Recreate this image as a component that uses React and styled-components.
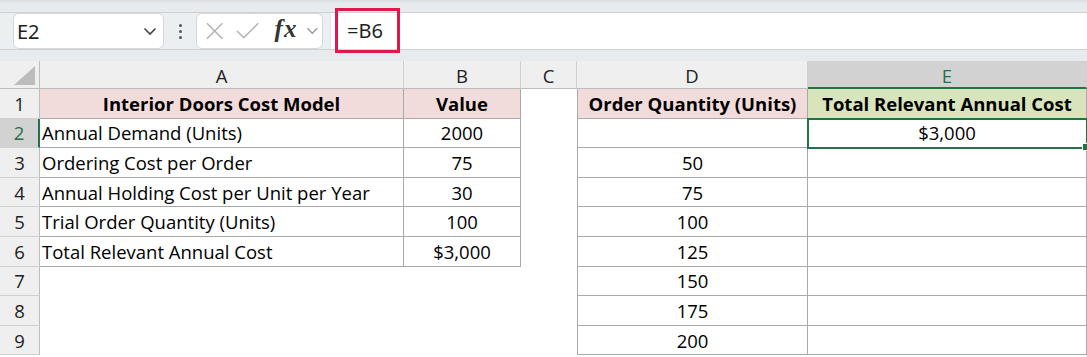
import React from "react";
import styled, { createGlobalStyle } from "styled-components";

const GlobalStyle = createGlobalStyle`
  body {
    margin: 0;
    background: #fff;
    font-family: "Open Sans", "Noto Sans", sans-serif;
    overflow: hidden;
  }
`;

const green = "#217346";
const line = "#a9a9a9";

const cols = ["A", "B", "C", "D", "E"];

const rows = [
  [
    { v: "Interior Doors Cost Model", bold: true, bg: "#f2dcdb", border: true },
    { v: "Value", bold: true, bg: "#f2dcdb", border: true },
    {},
    { v: "Order Quantity (Units)", bold: true, bg: "#f2dcdb", border: true, left: true },
    { v: "Total Relevant Annual Cost", bold: true, bg: "#d8e4bc", border: true },
  ],
  [
    { v: "Annual Demand (Units)", align: "left", border: true },
    { v: "2000", border: true },
    {},
    { v: "", border: true, left: true },
    { v: "$3,000", border: true, selected: true },
  ],
  [
    { v: "Ordering Cost per Order", align: "left", border: true },
    { v: "75", border: true },
    {},
    { v: "50", border: true, left: true },
    { v: "", border: true },
  ],
  [
    { v: "Annual Holding Cost per Unit per Year", align: "left", border: true },
    { v: "30", border: true },
    {},
    { v: "75", border: true, left: true },
    { v: "", border: true },
  ],
  [
    { v: "Trial Order Quantity (Units)", align: "left", border: true },
    { v: "100", border: true },
    {},
    { v: "100", border: true, left: true },
    { v: "", border: true },
  ],
  [
    { v: "Total Relevant Annual Cost", align: "left", border: true },
    { v: "$3,000", border: true },
    {},
    { v: "125", border: true, left: true },
    { v: "", border: true },
  ],
  [{}, {}, {}, { v: "150", border: true, left: true }, { v: "", border: true }],
  [{}, {}, {}, { v: "175", border: true, left: true }, { v: "", border: true }],
  [{}, {}, {}, { v: "200", border: true, left: true }, { v: "", border: true }],
];

const App = () => {
  return (
    <>
      <GlobalStyle />
      <Window>
        <RibbonEdge />
        <FormulaRow>
          <Tools>
            <NameBox>
              <span>E2</span>
              <Chevron width="14" height="9" viewBox="0 0 14 9">
                <path d="M1.5 1.5 L7 7 L12.5 1.5" />
              </Chevron>
            </NameBox>
            <Dots>
              <i />
              <i />
              <i />
            </Dots>
            <FxBox>
              <svg width="18" height="18" viewBox="0 0 18 18">
                <path d="M1 1 L17 17 M17 1 L1 17" stroke="#b3b3b3" strokeWidth="1.6" fill="none" />
              </svg>
              <svg width="24" height="18" viewBox="0 0 24 18">
                <path d="M1 9 L8 16 L23 1" stroke="#b3b3b3" strokeWidth="1.6" fill="none" />
              </svg>
              <Fx>fx</Fx>
              <Chevron width="13" height="8" viewBox="0 0 14 9" $light>
                <path d="M1.5 1.5 L7 7 L12.5 1.5" />
              </Chevron>
            </FxBox>
          </Tools>
          <FormulaInput>
            <Highlight>=B6</Highlight>
          </FormulaInput>
        </FormulaRow>
        <Band />
        <Grid>
          <Corner>
            <svg width="21" height="19" viewBox="0 0 21 19">
              <path d="M21 0 L21 19 L0 19 Z" fill="#bcbcbc" />
            </svg>
          </Corner>
          {cols.map((c) => (
            <ColHead key={c} $active={c === "E"}>
              {c}
            </ColHead>
          ))}
          {rows.map((r, i) => (
            <React.Fragment key={i}>
              <RowHead $active={i === 1}>{i + 1}</RowHead>
              {r.map((cell, j) => (
                <Cell
                  key={j}
                  $bold={cell.bold}
                  $bg={cell.bg}
                  $align={cell.align}
                  $border={cell.border}
                  $left={cell.left}
                  $selected={cell.selected}
                >
                  {cell.v}
                  {cell.selected && <FillHandle />}
                </Cell>
              ))}
            </React.Fragment>
          ))}
        </Grid>
      </Window>
    </>
  );
};

export default App;

const Window = styled.div`
  width: 1087px;
  height: 357px;
  overflow: hidden;
  display: flex;
  flex-direction: column;
`;

const RibbonEdge = styled.div`
  height: 12px;
  flex-shrink: 0;
  background: linear-gradient(#d9dde1, #e7eaed 30%, #e9ecef);
  border-bottom: 1px solid #cdd0d3;
`;

const FormulaRow = styled.div`
  height: 36px;
  flex-shrink: 0;
  display: flex;
  position: relative;
  z-index: 2;
`;

const Tools = styled.div`
  width: 330px;
  background: #eceff2;
  display: flex;
  align-items: center;
  padding-left: 13px;
  box-sizing: border-box;
`;

const NameBox = styled.div`
  width: 151px;
  height: 36px;
  box-sizing: border-box;
  background: #fff;
  border: 1px solid #d6d8da;
  border-radius: 6px;
  display: flex;
  align-items: center;
  justify-content: space-between;
  padding: 0 6px 0 3px;
  font-family: "Noto Sans", "Open Sans", sans-serif;
  font-size: 20px;
  color: #1f1f1f;
`;

const Chevron = styled.svg`
  fill: none;
  stroke: ${(p) => (p.$light ? "#9a9a9a" : "#444")};
  stroke-width: 1.6;
`;

const Dots = styled.div`
  width: 32px;
  display: flex;
  flex-direction: column;
  align-items: center;
  gap: 3px;
  i {
    width: 3px;
    height: 3px;
    border-radius: 50%;
    background: #555;
  }
`;

const FxBox = styled.div`
  width: 127px;
  height: 36px;
  box-sizing: border-box;
  background: #fff;
  border: 1px solid #d6d8da;
  border-radius: 6px;
  display: flex;
  align-items: center;
  padding: 0 3px 0 9px;
  gap: 15px;
  svg:nth-child(2) {
    margin-left: -2px;
  }
  svg:last-child {
    margin-left: -6px;
  }
`;

const Fx = styled.span`
  font-family: "Liberation Serif", "DejaVu Serif", serif;
  font-style: italic;
  font-weight: 600;
  font-size: 25px;
  letter-spacing: 1px;
  color: #333;
  margin-top: -4px;
`;

const FormulaInput = styled.div`
  flex: 1;
  background: #fff;
  border-left: 1px solid #e2e4e6;
  display: flex;
  align-items: flex-start;
  padding-left: 4px;
`;

const Highlight = styled.div`
  height: 45px;
  width: 65px;
  margin-top: -5px;
  box-sizing: border-box;
  border: 3px solid #e0194a;
  display: flex;
  align-items: center;
  padding-left: 9px;
  font-family: "Noto Sans", "Open Sans", sans-serif;
  font-size: 20px;
  color: #1f1f1f;
`;

const Band = styled.div`
  height: 11px;
  flex-shrink: 0;
  background: #e8ebee;
  border-top: 1px solid #cfd2d5;
`;

const Grid = styled.div`
  display: grid;
  grid-template-columns: 40px 364px 117px 56px 231px 279px;
  grid-template-rows: 28px repeat(9, 29.6px);
  font-size: 18.5px;
  color: #000;
`;

const Corner = styled.div`
  background: #efefef;
  border-right: 1px solid #bdbdbd;
  border-bottom: 1px solid #bdbdbd;
  box-sizing: border-box;
  display: flex;
  align-items: flex-end;
  justify-content: flex-end;
  padding: 0 4px 3px 0;
`;

const ColHead = styled.div`
  box-sizing: border-box;
  background: ${(p) => (p.$active ? "#d2d2d2" : "#efefef")};
  color: ${(p) => (p.$active ? green : "#222")};
  border-right: 1px solid #d0d0d0;
  border-bottom: ${(p) => (p.$active ? `2px solid ${green}` : "1px solid #bdbdbd")};
  display: flex;
  align-items: center;
  justify-content: center;
  padding-top: 2px;
`;

const RowHead = styled.div`
  box-sizing: border-box;
  background: ${(p) => (p.$active ? "#d2d2d2" : "#efefef")};
  color: ${(p) => (p.$active ? green : "#222")};
  border-bottom: 1px solid #d0d0d0;
  border-right: ${(p) => (p.$active ? `2px solid ${green}` : "1px solid #bdbdbd")};
  display: flex;
  align-items: center;
  justify-content: center;
`;

const Cell = styled.div`
  position: relative;
  box-sizing: border-box;
  background: ${(p) => p.$bg || "#fff"};
  font-weight: ${(p) => (p.$bold ? 700 : 400)};
  display: flex;
  align-items: center;
  justify-content: ${(p) => (p.$align === "left" ? "flex-start" : "center")};
  padding: 0 2px;
  white-space: nowrap;
  border-right: ${(p) => (p.$border ? `1px solid ${line}` : "none")};
  border-bottom: ${(p) => (p.$border ? `1px solid ${line}` : "none")};
  border-left: ${(p) => (p.$left ? `1px solid ${line}` : "none")};
  ${(p) =>
    p.$selected &&
    `
    outline: 2px solid ${green};
    outline-offset: -1px;
    z-index: 1;
  `}
`;

const FillHandle = styled.span`
  position: absolute;
  right: -4px;
  bottom: -4px;
  width: 6px;
  height: 6px;
  background: ${green};
  border: 1px solid #fff;
`;
